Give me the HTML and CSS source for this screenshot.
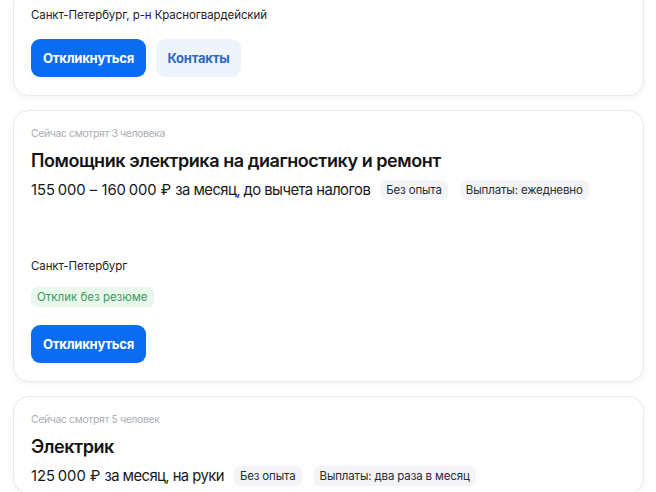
FILE: index.html
```html
<!DOCTYPE html>
<html lang="ru">
<head>
<meta charset="utf-8">
<title>Вакансии</title>
<link rel="stylesheet" href="styles.css">
</head>
<body>
<div class="list">
  <div class="card card-first">
    <div class="location">Санкт-Петербург, р-н Красногвардейский</div>
    <div class="actions">
      <button class="btn btn-primary">Откликнуться</button>
      <button class="btn btn-secondary">Контакты</button>
    </div>
  </div>

  <div class="card">
    <div class="meta">Сейчас смотрят 3 человека</div>
    <div class="title">Помощник электрика на диагностику и ремонт</div>
    <div class="salary-row">
      <span class="salary">155&#8239;000 – 160&#8239;000 ₽ за месяц, до вычета налогов</span>
      <span class="tag">Без опыта</span>
      <span class="tag">Выплаты: ежедневно</span>
    </div>
    <div class="company"></div>
    <div class="location">Санкт-Петербург</div>
    <div class="green-row"><span class="tag-green">Отклик без резюме</span></div>
    <div class="actions actions-wide">
      <button class="btn btn-primary">Откликнуться</button>
    </div>
  </div>

  <div class="card card-last">
    <div class="meta">Сейчас смотрят 5 человек</div>
    <div class="title">Электрик</div>
    <div class="salary-row">
      <span class="salary">125&#8239;000 ₽ за месяц, на руки</span>
      <span class="tag">Без опыта</span>
      <span class="tag">Выплаты: два раза в месяц</span>
    </div>
  </div>
</div>
</body>
</html>
```

FILE: styles.css
```css
* { box-sizing: border-box; }

html, body {
  margin: 0;
  padding: 0;
  background: #ffffff;
  font-family: "Inter", "Liberation Sans", sans-serif;
  color: #1c1d1f;
  overflow: hidden;
  height: 492px;
}

.list {
  display: flex;
  flex-direction: column;
  gap: 14px;
  width: 644px;
  padding-left: 13px;
}

.card {
  border: 1px solid #e8eaed;
  border-radius: 16px;
  background: #fff;
  padding: 15px 17px 18px;
  box-shadow: 0 2px 6px rgba(30, 40, 60, 0.05);
}

.card-first {
  margin-top: -14px;
  padding-top: 20px;
}

.card-last {
  padding-bottom: 6px;
}

.meta {
  font-size: 10.5px;
  line-height: 16px;
  color: #a9aeb4;
  letter-spacing: -0.4px;
  white-space: nowrap;
}

.title {
  margin-top: 7px;
  font-size: 18px;
  line-height: 24px;
  font-weight: 600;
  color: #131415;
  letter-spacing: -0.45px;
  white-space: nowrap;
}

.salary-row {
  margin-top: 6px;
  display: flex;
  align-items: center;
  height: 22px;
  gap: 11px;
}

.salary {
  font-size: 14.8px;
  line-height: 20px;
  color: #17181a;
  letter-spacing: -0.55px;
  white-space: nowrap;
  margin-right: -1px;
}

.tag {
  display: inline-flex;
  align-items: center;
  height: 20px;
  padding: 0 6px;
  border-radius: 6px;
  background: #f2f4f8;
  font-size: 11.5px;
  letter-spacing: -0.15px;
  color: #2a2c30;
  white-space: nowrap;
}

.tag + .tag {
  margin-left: 1px;
}

.company {
  height: 57px;
}

.location {
  font-size: 11.5px;
  line-height: 16px;
  letter-spacing: -0.1px;
  color: #1c1d1f;
  white-space: nowrap;
}

.green-row {
  margin-top: 13px;
  display: flex;
}

.tag-green {
  display: inline-flex;
  align-items: center;
  height: 20px;
  padding: 0 6px;
  border-radius: 6px;
  background: #e9f7ed;
  color: #3f9b5b;
  font-size: 11.5px;
  white-space: nowrap;
}

.actions {
  display: flex;
  gap: 10px;
  margin-top: 16px;
}

.actions-wide {
  margin-top: 18px;
}

.btn {
  height: 38px;
  border: none;
  border-radius: 9px;
  font-family: inherit;
  font-size: 13px;
  font-weight: 700;
  letter-spacing: -0.2px;
  padding: 0 10px;
  cursor: pointer;
}

.btn-primary {
  background: #0a6cf0;
  color: #ffffff;
  width: 115px;
}

.btn-secondary {
  background: #eef4fc;
  color: #2a69c2;
  width: 85px;
}
```
